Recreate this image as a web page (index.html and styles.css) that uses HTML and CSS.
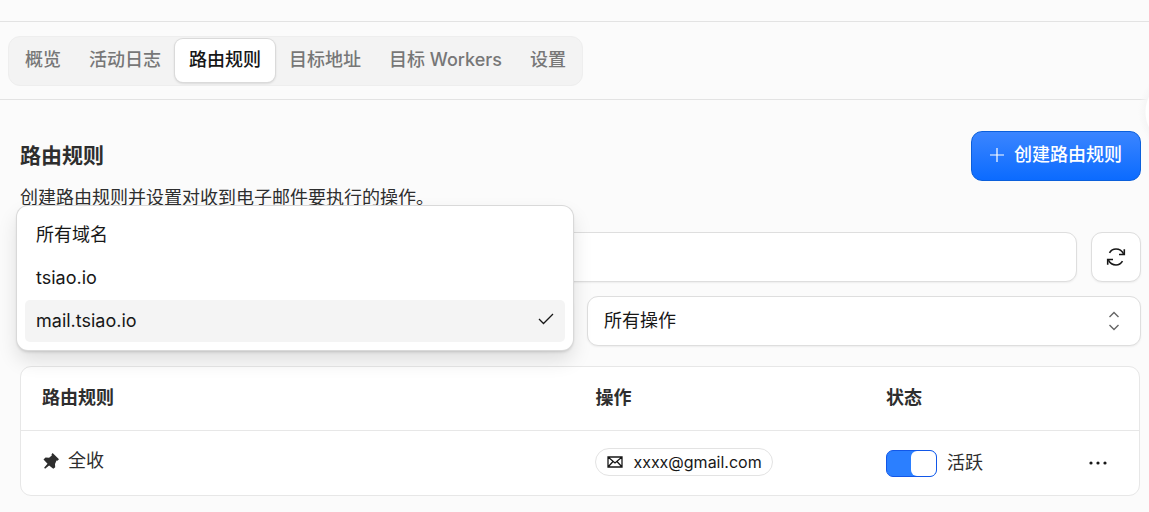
FILE: index.html
```html
<!DOCTYPE html>
<html lang="zh-CN">
  <head>
    <meta charset="UTF-8" />
    <meta name="viewport" content="width=device-width, initial-scale=1.0" />
    <title>路由规则</title>
    <link rel="stylesheet" href="styles.css">
  </head>
  <body>
    <header class="topbar"></header>
    <div class="tabs-bar">
      <nav class="tabs">
        <a href="#overview" class="tab">概览</a>
        <a href="#activity" class="tab">活动日志</a>
        <a href="#rules" class="tab active" aria-current="page">路由规则</a>
        <a href="#addresses" class="tab">目标地址</a>
        <a href="#workers" class="tab">目标 Workers</a>
        <a href="#settings" class="tab">设置</a>
      </nav>
    </div>
    <div class="side-handle"></div>

    <main class="content">
      <div class="page-head">
        <div class="page-title">
          <h1>路由规则</h1>
          <p>创建路由规则并设置对收到电子邮件要执行的操作。</p>
        </div>
        <button type="button" class="create-btn">
          <svg width="14" height="14" viewBox="0 0 14 14" fill="none" stroke="currentColor" stroke-width="1.2">
            <path d="M7 0v14M0 7h14" />
          </svg>
          创建路由规则
        </button>
      </div>

      <div class="search-row">
        <input type="search" class="box search" aria-label="搜索" />
        <button type="button" class="box refresh" aria-label="刷新">
          <svg width="20" height="20" viewBox="0 0 20 20" fill="none" stroke="currentColor" stroke-width="1.6">
            <path d="M3.500 5.800C5 3.300 7.300 2 10 2c3.200 0 6 1.800 7.600 4.800" />
            <path d="M18.300 2.300v5.200h-5.300" />
            <path d="M16.500 14.200C15 16.700 12.700 18 10 18c-3.200 0-6-1.800-7.600-4.800" />
            <path d="M1.700 17.700v-5.200h5.300" />
          </svg>
        </button>
      </div>

      <div class="filter-row">
        <div class="domain-filter">
          <button type="button" class="box trigger" aria-label="域名" aria-haspopup="listbox" aria-expanded="true"></button>
          <div class="menu" role="listbox" aria-label="域名">
            <button type="button" class="option" role="option">所有域名</button>
            <button type="button" class="option" role="option">tsiao.io</button>
            <button type="button" class="option selected" role="option" aria-selected="true">
              mail.tsiao.io
              <svg class="check" width="16" height="12" viewBox="0 0 16 12" fill="none" stroke="currentColor" stroke-width="1.3">
                <path d="M1 6l4.500 4.500L15 1" />
              </svg>
            </button>
          </div>
        </div>
        <div class="action-filter">
          <select class="box action-select" aria-label="操作">
            <option>所有操作</option>
          </select>
          <svg class="caret" width="12" height="20" viewBox="0 0 12 20" fill="none" stroke="currentColor" stroke-width="1.4">
            <path d="M1.500 6L6 1.500 10.500 6M1.500 14L6 18.500 10.500 14" />
          </svg>
        </div>
      </div>

      <div class="table-card">
        <table class="rules">
          <thead>
            <tr>
              <th class="col-rule">路由规则</th>
              <th class="col-action">操作</th>
              <th class="col-status">状态</th>
              <th class="col-more"></th>
            </tr>
          </thead>
          <tbody>
            <tr>
              <td>
                <span class="rule-name">
                  <svg width="18" height="18" viewBox="0 0 18 18" fill="currentColor">
                    <path d="M10.600 1l6.400 6.200-1.600 1.600-.9-.2-1.500 3.400.2 3.200-1.900 1.600-4.200-3.400-4 3.400-1-1 3.400-4L1.500 7.600l2-2 3.600.2 2.700-2.200-.3-1.200z" />
                  </svg>
                  全收
                </span>
              </td>
              <td>
                <span class="mail-pill">
                  <svg width="16" height="12" viewBox="0 0 16 12" fill="none" stroke="currentColor" stroke-width="1.3">
                    <path d="M1 1h14v10H1zM1 1l7 6 7-6M1 11l5-5.500M15 11l-5-5.500" />
                  </svg>
                  xxxx@gmail.com
                </span>
              </td>
              <td>
                <label class="status">
                  <input type="checkbox" class="switch" checked />
                  活跃
                </label>
              </td>
              <td>
                <button type="button" class="more-btn" aria-label="更多">
                  <svg width="18" height="4" viewBox="0 0 18 4" fill="currentColor">
                    <circle cx="2" cy="2" r="1.600" />
                    <circle cx="9" cy="2" r="1.600" />
                    <circle cx="16" cy="2" r="1.600" />
                  </svg>
                </button>
              </td>
            </tr>
          </tbody>
        </table>
      </div>
    </main>
  </body>
</html>
```
FILE: styles.css
```css
* {
  box-sizing: border-box;
  margin: 0;
  padding: 0;
}

body {
  position: relative;
  background-color: #fbfbfb;
  color: #2e2e2e;
  font-family: Inter, "Noto Sans CJK SC", sans-serif;
  font-size: 18px;
  line-height: 26px;
}
button,
input,
select {
  font: inherit;
  color: inherit;
}
button {
  cursor: pointer;
}
svg {
  display: block;
  flex: none;
}

/* top navigation */
.topbar {
  height: 22px;
  border-bottom: 1px solid #e3e3e3;
}
.tabs-bar {
  padding: 14px 8px 13px;
  border-bottom: 1px solid #e3e3e3;
}
.tabs {
  display: inline-flex;
  vertical-align: top;
  height: 50px;
  padding: 2px 2px 3px;
  border: 1px solid #eeeeee;
  border-radius: 12px;
  background-color: #f3f3f3;
}
.tab {
  padding: 8px 14px;
  border-radius: 8px;
  color: #777777;
  font-weight: 500;
  text-decoration: none;
  white-space: nowrap;
}
.tab.active {
  background-color: white;
  color: #171717;
  box-shadow: 0 0 0 1px #dadada, 0 1px 3px rgba(0, 0, 0, 0.2);
}
/* round handle peeking in from the right edge */
.side-handle {
  position: absolute;
  top: 70px;
  right: 0;
  width: 12px;
  height: 84px;
  background: radial-gradient(circle at 43px 42px, white 34px, #f6f6f6 35px, #fbfbfb00 42px);
  pointer-events: none;
}

/* page head */
.content {
  padding: 31px 8px 16px 20px;
}
.page-head {
  display: flex;
  justify-content: space-between;
  align-items: flex-start;
  height: 101px;
}
.page-title {
  padding-top: 12px;
}
.page-title h1 {
  margin-bottom: 16px;
  font-size: 21px;
  line-height: 26px;
  font-weight: 600;
}
.create-btn {
  display: flex;
  align-items: center;
  gap: 10px;
  height: 50px;
  padding: 0 18px 2px;
  border: 1px solid #0b5fdb;
  border-radius: 11px;
  background: linear-gradient(#3b85ff, #0b6bff);
  color: white;
  font-weight: 500;
}

/* search and filters */
.box {
  height: 50px;
  border: 1px solid #dedede;
  border-radius: 11px;
  background-color: white;
  box-shadow: 0 1px 2px rgba(0, 0, 0, 0.06);
}
.search-row {
  display: flex;
  gap: 14px;
  margin-bottom: 14px;
}
.search {
  flex: 1;
  min-width: 0;
  padding: 0 16px;
}
.refresh {
  display: flex;
  align-items: center;
  justify-content: center;
  width: 50px;
  color: #171717;
}
.filter-row {
  display: grid;
  grid-template-columns: 1fr 1fr;
  gap: 13px;
  margin-bottom: 20px;
}
.domain-filter,
.action-filter {
  position: relative;
}
.trigger {
  display: block;
  width: 100%;
}
.menu {
  position: absolute;
  left: -3px;
  right: 1px;
  bottom: -4px;
  z-index: 2;
  display: flex;
  flex-direction: column;
  gap: 1px;
  padding: 8px;
  border-radius: 11px;
  background-color: white;
  box-shadow: 0 0 0 1px #d9d9d9, 0 2px 3px rgba(0, 0, 0, 0.15), 0 10px 20px rgba(0, 0, 0, 0.12);
}
.option {
  display: flex;
  align-items: center;
  justify-content: space-between;
  height: 42px;
  padding: 0 11px;
  border: none;
  border-radius: 5px;
  background: none;
  color: #171717;
}
.option.selected {
  background-color: #f4f4f4;
}
.check {
  margin-bottom: 4px;
}
.action-select {
  display: block;
  width: 100%;
  padding: 0 44px 0 16px;
  appearance: none;
  color: #171717;
}
.caret {
  position: absolute;
  top: 15px;
  right: 21px;
  color: #666666;
  pointer-events: none;
}

/* rules table */
.table-card {
  margin-right: 1px;
  border: 1px solid #e7e7e7;
  border-radius: 11px;
  background-color: white;
}
.rules {
  width: 100%;
  border-spacing: 0;
  table-layout: fixed;
}
.rules th,
.rules td {
  height: 64px;
  padding: 0 21px;
  text-align: left;
}
.rules th {
  padding-bottom: 2px;
  border-bottom: 1px solid #e7e7e7;
  font-weight: 600;
}
.col-rule {
  width: 49.5%;
}
.col-action {
  width: 26%;
}
.col-more {
  width: 82px;
}
.rule-name,
.status {
  display: flex;
  align-items: center;
  gap: 10px;
}
.rule-name {
  gap: 8px;
  padding-bottom: 4px;
}
.mail-pill {
  display: inline-flex;
  align-items: center;
  gap: 10px;
  height: 28px;
  margin-bottom: 2px;
  padding: 0 10px 0 11px;
  border: 1px solid #e3e3e3;
  border-radius: 14px;
  color: #171717;
  font-size: 16px;
  vertical-align: middle;
}
.switch {
  display: flex;
  justify-content: flex-end;
  width: 51px;
  height: 27px;
  border: 1px solid #1257e8;
  border-radius: 7px;
  appearance: none;
  background-color: #2b7fff;
  cursor: pointer;
}
.switch::before {
  content: "";
  width: 25px;
  border-radius: 6px;
  background-color: white;
}
.switch:not(:checked) {
  justify-content: flex-start;
  border-color: #cccccc;
  background-color: #dddddd;
}
.more-btn {
  display: flex;
  align-items: center;
  justify-content: center;
  width: 40px;
  height: 40px;
  border: none;
  background: none;
  color: #171717;
}
```
